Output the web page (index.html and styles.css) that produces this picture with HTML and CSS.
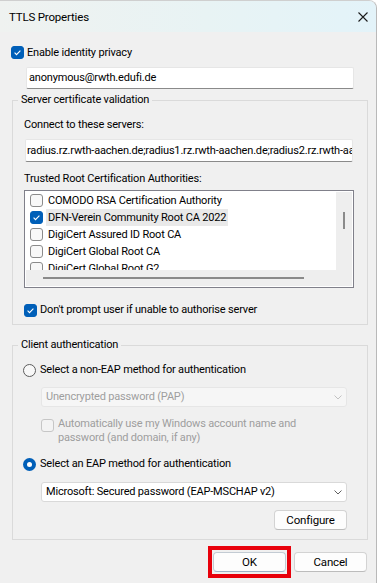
FILE: index.html
```html
<!DOCTYPE HTML>
<html>
	<head>
		<meta charset="utf-8">
		<link rel="stylesheet" href="styles.css">
	</head>
	<body>
		<div class="window">
			<div class="titlebar">
				<span class="title">TTLS Properties</span>
				<svg class="close" viewBox="0 0 10 10"><path d="M0.5 0.5 L9.5 9.5 M9.5 0.5 L0.5 9.5" stroke="#1b1b1b" stroke-width="1.1" fill="none"/></svg>
			</div>

			<div class="check-row privacy">
				<span class="box checked"><svg viewBox="0 0 11 11"><path d="M2.6 5.7 L4.5 7.6 L8.4 3.6" stroke="#fff" stroke-width="1.1" fill="none"/></svg></span>
				<span class="check-text">Enable identity privacy</span>
			</div>
			<div class="textbox identity">anonymous@rwth.edufi.de</div>

			<fieldset class="group server">
				<legend>Server certificate validation</legend>
				<div class="label connect">Connect to these servers:</div>
				<div class="textbox servers">radius.rz.rwth-aachen.de;radius1.rz.rwth-aachen.de;radius2.rz.rwth-aachen.de</div>
				<div class="label trusted">Trusted Root Certification Authorities:</div>
				<div class="listbox">
					<div class="list-view">
						<div class="list-items">
							<div class="list-item"><span class="box"></span><span class="item-text">COMODO RSA Certification Authority</span></div>
							<div class="list-item"><span class="box checked"><svg viewBox="0 0 11 11"><path d="M2.6 5.7 L4.5 7.6 L8.4 3.6" stroke="#fff" stroke-width="1.1" fill="none"/></svg></span><span class="item-text selected">DFN-Verein Community Root CA 2022</span></div>
							<div class="list-item"><span class="box"></span><span class="item-text">DigiCert Assured ID Root CA</span></div>
							<div class="list-item"><span class="box"></span><span class="item-text">DigiCert Global Root CA</span></div>
							<div class="list-item"><span class="box"></span><span class="item-text">DigiCert Global Root G2</span></div>
						</div>
						<div class="vscroll"><span class="vthumb"></span></div>
					</div>
					<div class="hscroll"><span class="hthumb"></span></div>
				</div>
				<div class="check-row prompt">
					<span class="box checked"><svg viewBox="0 0 11 11"><path d="M2.6 5.7 L4.5 7.6 L8.4 3.6" stroke="#fff" stroke-width="1.1" fill="none"/></svg></span>
					<span class="check-text">Don't prompt user if unable to authorise server</span>
				</div>
			</fieldset>

			<fieldset class="group client">
				<legend>Client authentication</legend>
				<div class="check-row radio-row non-eap">
					<span class="radio"></span>
					<span class="check-text">Select a non-EAP method for authentication</span>
				</div>
				<div class="combo disabled pap">
					<span>Unencrypted password (PAP)</span>
					<svg class="chevron" viewBox="0 0 8 5"><path d="M0.5 0.5 L4 4 L7.5 0.5" stroke="#c2c2c2" stroke-width="1" fill="none"/></svg>
				</div>
				<div class="check-row auto-login">
					<span class="box disabled"></span>
					<span class="check-text">Automatically use my Windows account name and<br>password (and domain, if any)</span>
				</div>
				<div class="check-row radio-row eap">
					<span class="radio checked"></span>
					<span class="check-text">Select an EAP method for authentication</span>
				</div>
				<div class="combo mschap">
					<span>Microsoft: Secured password (EAP-MSCHAP v2)</span>
					<svg class="chevron" viewBox="0 0 8 5"><path d="M0.5 0.5 L4 4 L7.5 0.5" stroke="#5f5f5f" stroke-width="1" fill="none"/></svg>
				</div>
				<div class="configure-row">
					<button class="btn">Configure</button>
				</div>
			</fieldset>

			<div class="actions">
				<span class="marker"><button class="btn default">OK</button></span>
				<button class="btn">Cancel</button>
			</div>
		</div>
	</body>
</html>
```
FILE: styles.css
```css
html, body{
	margin: 0;
	padding: 0;
}
body{
	background-color: #ffffff;
	font-family: Roboto, "Liberation Sans", sans-serif;
	font-size: 11px;
	line-height: 14px;
	letter-spacing: -0.18px;
	color: #000000;
	overflow: hidden;
}
.window{
	width: 377px;
	height: 583px;
	box-sizing: border-box;
	background-color: #f0f0f0;
	border-top: 1px solid #cfcfcf;
	border-right: 1px solid #b9b9b9;
	border-top-right-radius: 8px;
	overflow: hidden;
}
.titlebar{
	height: 31px;
	display: flex;
	align-items: center;
	justify-content: space-between;
	padding-left: 9px;
	background: linear-gradient(90deg, #eff2f0 0%, #e8f3f4 55%, #e3f3f9 100%);
}
.title{
	font-size: 11.5px;
}
.close{
	width: 10px;
	height: 10px;
	margin-right: 8px;
}

/* checkboxes and radios */
.check-row{
	display: flex;
	align-items: center;
	height: 16px;
}
.box{
	flex: none;
	display: flex;
	width: 13px;
	height: 13px;
	box-sizing: border-box;
	border: 1px solid #8b8b8b;
	border-radius: 3px;
	background-color: #f8f8f8;
}
.box.checked{
	background-color: #005fb8;
	border-color: #005fb8;
}
.box.disabled{
	border-color: #c6c6c6;
	background-color: #f3f3f3;
}
.box svg{
	width: 11px;
	height: 11px;
}
.check-text{
	margin-left: 3px;
	white-space: nowrap;
}
.radio{
	flex: none;
	width: 13px;
	height: 13px;
	box-sizing: border-box;
	border: 1px solid #5c5c5c;
	border-radius: 50%;
	background-color: #f8f8f8;
}
.radio.checked{
	display: flex;
	align-items: center;
	justify-content: center;
	border: none;
	background-color: #005fb8;
}
.radio.checked::after{
	content: "";
	width: 5px;
	height: 5px;
	border-radius: 50%;
	background-color: #ffffff;
}
.radio-row .check-text{
	margin-left: 4px;
}

.privacy{
	height: 15px;
	margin-top: 13px;
	padding-left: 11px;
}

/* text inputs */
.textbox{
	box-sizing: border-box;
	height: 22px;
	line-height: 20px;
	background-color: #ffffff;
	border: 1px solid #e6e6e6;
	border-bottom-color: #8a8a8a;
	border-radius: 2px;
	padding-left: 2px;
	white-space: nowrap;
	overflow: hidden;
}
.identity{
	width: 328px;
	margin: 7px 0 0 26px;
}
.servers{
	width: 328px;
	height: 23px;
	line-height: 21px;
	margin: 7px 0 0 12px;
	padding-left: 1px;
}

/* group boxes */
.group{
	margin: 4px 8px 0 12px;
	padding: 0 0 6px 0;
	border: 1px solid #dadada;
	border-radius: 0;
	min-width: 0;
}
.group legend{
	margin-left: 5px;
	padding: 0 3px;
	line-height: 14px;
}
.client{
	margin-top: 13px;
	padding-bottom: 9px;
}
.label{
	margin-left: 11px;
	height: 14px;
}
.connect{
	margin-top: 11px;
}
.trusted{
	margin-top: 10px;
}

/* certificate list */
.listbox{
	width: 330px;
	height: 98px;
	box-sizing: border-box;
	margin: 4px 0 0 11px;
	border: 1px solid #80808a;
	padding: 1px;
	background-color: #ffffff;
	display: flex;
	flex-direction: column;
}
.list-view{
	display: flex;
	height: 78px;
}
.list-items{
	width: 310px;
	overflow: hidden;
	padding-left: 4px;
	box-sizing: border-box;
}
.list-item{
	display: flex;
	align-items: center;
	height: 17px;
	white-space: nowrap;
}
.item-text{
	margin-left: 3px;
	padding: 0 2px;
	line-height: 17px;
}
.item-text.selected{
	background-color: #e9e9e9;
}
.vscroll{
	width: 16px;
	background-color: #eeeeee;
}
.vthumb{
	display: block;
	width: 2px;
	height: 17px;
	margin: 20px 0 0 7px;
	background-color: #8a8a8a;
}
.hscroll{
	height: 16px;
	background-color: #eeeeee;
}
.hthumb{
	display: block;
	width: 261px;
	height: 2px;
	margin: 7px 0 0 17px;
	background-color: #8a8a8a;
}
.prompt{
	margin-top: 14px;
	padding-left: 11px;
}

/* client authentication */
.radio-row{
	padding-left: 10px;
}
.non-eap{
	margin-top: 10px;
}
.eap{
	margin-top: 11px;
}
.combo{
	display: flex;
	align-items: center;
	justify-content: space-between;
	width: 306px;
	height: 20px;
	box-sizing: border-box;
	margin-left: 28px;
	padding: 0 4px 0 4px;
	background-color: #ffffff;
	border: 1px solid #d9d9d9;
	border-radius: 3px;
}
.combo.disabled{
	background-color: #f6f6f6;
	border-color: #e6e6e6;
	color: #9e9e9e;
}
.pap{
	margin-top: 9px;
}
.mschap{
	margin-top: 10px;
}
.chevron{
	width: 8px;
	height: 5px;
}
.auto-login{
	align-items: flex-start;
	height: auto;
	margin-top: 10px;
	padding-left: 28px;
	color: #9e9e9e;
}
.auto-login .box{
	margin-top: 2px;
}
.auto-login .check-text{
	margin-left: 4px;
	line-height: 14px;
}
.configure-row{
	display: flex;
	justify-content: flex-end;
	margin-top: 8px;
	padding-right: 20px;
}

/* buttons */
.btn{
	width: 73px;
	height: 20px;
	box-sizing: border-box;
	padding: 0;
	font-family: inherit;
	font-size: 11.5px;
	letter-spacing: -0.18px;
	color: #000000;
	background-color: #fdfdfd;
	border: 1px solid #d3d3d3;
	border-bottom-color: #bcbcbc;
	border-radius: 4px;
}
.btn.default{
	border-color: #c3cbd3;
	border-bottom-color: #9fb2c6;
}
.actions{
	display: flex;
	justify-content: flex-end;
	align-items: center;
	gap: 3px;
	margin-top: 6px;
	padding-right: 9px;
}
.marker{
	display: flex;
	border: 4px solid #e8000b;
	padding: 2px 1px;
}
```
